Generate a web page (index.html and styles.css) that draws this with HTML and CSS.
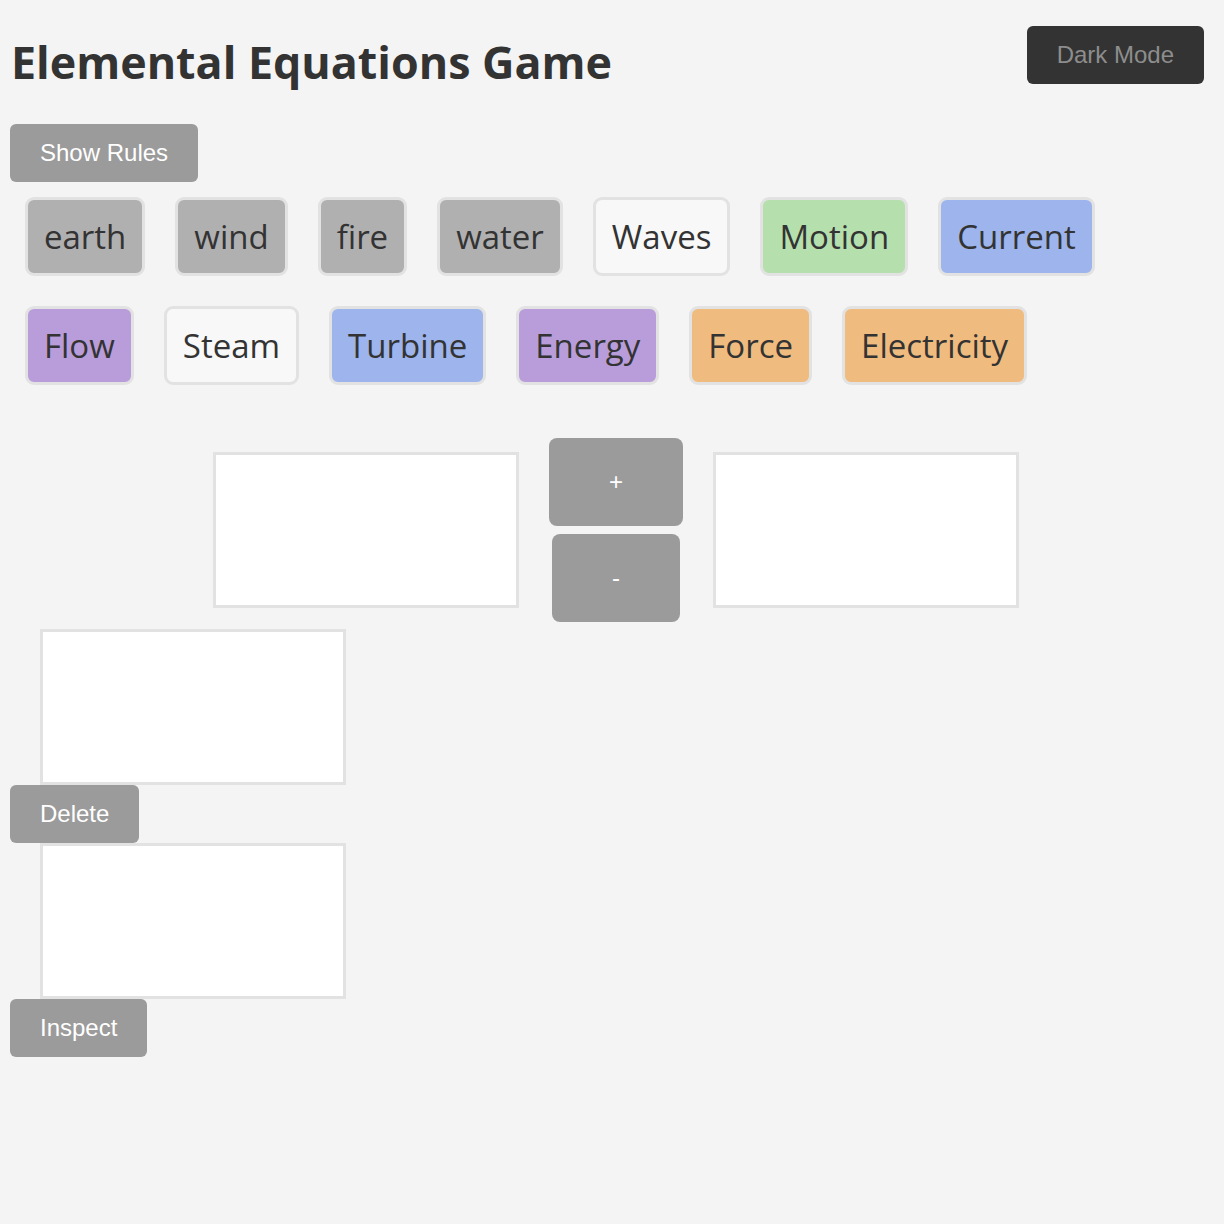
FILE: index.html
```html
<!DOCTYPE html>
<html>
<head>
<meta charset="utf-8">
<link rel="stylesheet" href="styles.css">
</head>
<body>
<header class="header">
  <h1 class="title">Elemental Equations Game</h1>
  <button class="btn btn-dark">Dark Mode</button>
</header>
<button class="btn">Show Rules</button>
<div class="elements">
  <div class="el el-gray">earth</div>
  <div class="el el-gray">wind</div>
  <div class="el el-gray">fire</div>
  <div class="el el-gray">water</div>
  <div class="el el-white">Waves</div>
  <div class="el el-green">Motion</div>
  <div class="el el-blue">Current</div>
  <div class="el el-purple">Flow</div>
  <div class="el el-white">Steam</div>
  <div class="el el-blue">Turbine</div>
  <div class="el el-purple">Energy</div>
  <div class="el el-orange">Force</div>
  <div class="el el-orange">Electricity</div>
</div>
<div class="equation">
  <div class="slot"></div>
  <div class="ops">
    <button class="btn btn-op">+</button>
    <button class="btn btn-op">-</button>
  </div>
  <div class="slot"></div>
</div>
<div class="slot slot-result"></div>
<button class="btn">Delete</button>
<div class="slot slot-result"></div>
<button class="btn">Inspect</button>
</body>
</html>
```
FILE: styles.css
```css
html, body {
  margin: 0;
  background: #f4f4f4;
}
body {
  padding: 0 10px;
  color: #333;
  font-family: "Open Sans", "Noto Sans", sans-serif;
}
.header {
  display: flex;
  justify-content: space-between;
  align-items: flex-start;
}
.title {
  font-size: 44.8px;
  font-weight: 700;
  margin: 30px 0 30px 1px;
  line-height: 64px;
}
.btn {
  display: block;
  font-family: "Liberation Sans", Arial, sans-serif;
  font-size: 24px;
  line-height: 28px;
  padding: 15px 30px;
  border: none;
  border-radius: 6px;
  background: #9b9b9b;
  color: #fff;
}
.btn-dark {
  background: #333;
  color: #8d8d8d;
  margin: 26px 10px 0 0;
}
.elements {
  display: flex;
  flex-wrap: wrap;
  padding: 0;
}
.el {
  margin: 15px;
  border: 3px solid #e2e2e2;
  border-radius: 9px;
  padding: 13px 16px 12px;
  font-size: 33px;
  line-height: 48px;
}
.el-gray { background: #b0b0b0; }
.el-white { background: #f8f8f8; }
.el-green { background: #b5dfad; }
.el-blue { background: #9db4ec; }
.el-purple { background: #b99ddb; }
.el-orange { background: #f0bb7e; }
.equation {
  display: flex;
  justify-content: center;
  align-items: center;
  gap: 30px;
  margin-top: 38px;
  padding-left: 8px;
}
.ops {
  display: flex;
  flex-direction: column;
  align-items: center;
  gap: 8px;
}
.btn-op {
  padding: 30px 60px;
  border-radius: 8px;
}
.slot {
  width: 300px;
  height: 150px;
  background: #fff;
  border: 3px solid #e2e2e2;
}
.slot-result {
  margin-left: 30px;
}
.equation + .slot-result {
  margin-top: 7px;
}
```
